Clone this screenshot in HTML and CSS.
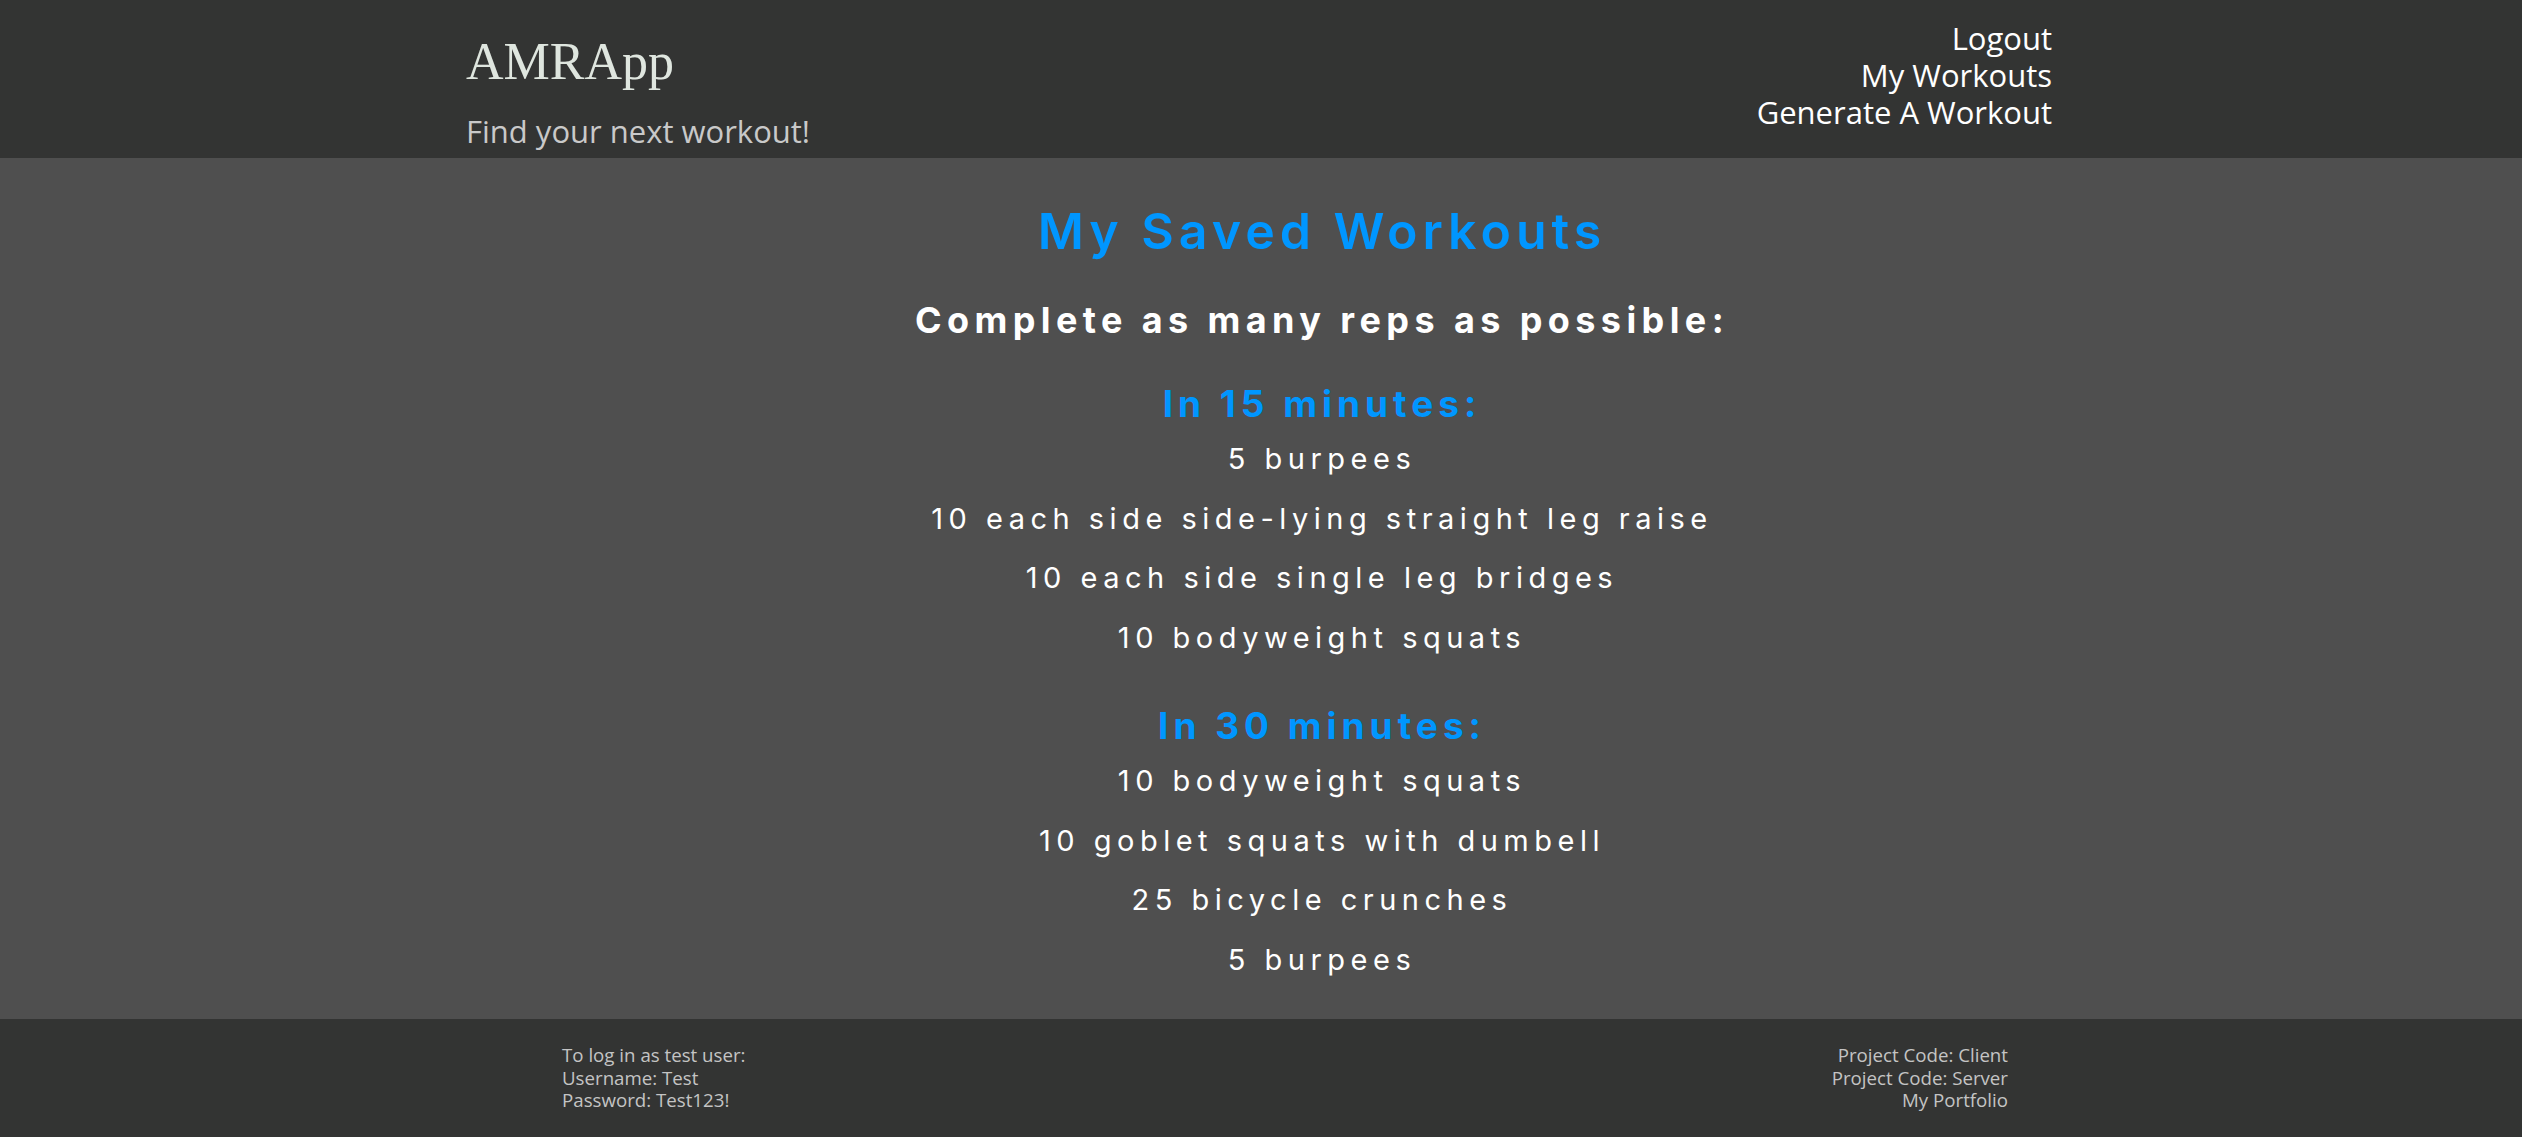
FILE: index.html
```html
<!DOCTYPE html>
<html lang="en">
<head>
<meta charset="utf-8">
<title>AMRApp</title>
<link rel="stylesheet" href="styles.css">
</head>
<body>
<header class="site-header">
  <div class="header-inner">
    <div class="brand">
      <h1 class="logo">AMRApp</h1>
      <p class="tagline">Find your next workout!</p>
    </div>
    <nav class="nav">
      <a href="#">Logout</a>
      <a href="#">My Workouts</a>
      <a href="#">Generate A Workout</a>
    </nav>
  </div>
</header>
<main class="main">
  <h2 class="page-title">My Saved Workouts</h2>
  <h3 class="subtitle">Complete as many reps as possible:</h3>
  <section class="workout">
    <h4 class="duration">In 15 minutes:</h4>
    <ul class="exercises">
      <li>5 burpees</li>
      <li>10 each side side-lying straight leg raise</li>
      <li>10 each side single leg bridges</li>
      <li>10 bodyweight squats</li>
    </ul>
  </section>
  <section class="workout">
    <h4 class="duration">In 30 minutes:</h4>
    <ul class="exercises">
      <li>10 bodyweight squats</li>
      <li>10 goblet squats with dumbell</li>
      <li>25 bicycle crunches</li>
      <li>5 burpees</li>
    </ul>
  </section>
</main>
<footer class="site-footer">
  <div class="footer-inner">
    <div class="footer-left">
      <span>To log in as test user:</span>
      <span>Username: Test</span>
      <span>Password: Test123!</span>
    </div>
    <div class="footer-right">
      <a href="#">Project Code: Client</a>
      <a href="#">Project Code: Server</a>
      <a href="#">My Portfolio</a>
    </div>
  </div>
</footer>
</body>
</html>
```
FILE: styles.css
```css
* { box-sizing: border-box; }
html, body { margin: 0; padding: 0; }
body {
  background: #4f4f4f;
  font-family: "Open Sans", "Noto Sans", sans-serif;
  min-height: 1137px;
  display: flex;
  flex-direction: column;
}
a { color: inherit; text-decoration: none; }

.site-header { background: #333433; height: 158px; }
.header-inner {
  width: 1590px;
  margin: 0 auto;
  display: flex;
  justify-content: space-between;
}
.brand { padding-top: 32px; }
.logo {
  margin: 0;
  font-family: "Liberation Serif", "DejaVu Serif", serif;
  font-weight: 400;
  font-size: 52px;
  line-height: 60px;
  color: #dfe6df;
}
.tagline {
  margin: 19px 0 0;
  font-size: 31px;
  line-height: 40px;
  color: #c9c9c9;
}
.nav {
  padding-top: 20px;
  padding-right: 4px;
  display: flex;
  flex-direction: column;
  align-items: flex-end;
  font-size: 31px;
  line-height: 37px;
  color: #ffffff;
}

.main {
  flex: 1;
  padding: 43px 0 28px 122px;
  text-align: center;
  font-family: "Inter", "Lato", sans-serif;
}
.page-title {
  margin: 0;
  font-size: 50px;
  line-height: 60px;
  font-weight: 600;
  letter-spacing: 5px;
  color: #0096ff;
}
.subtitle {
  margin: 37px 0 0;
  font-size: 36px;
  line-height: 44px;
  font-weight: 700;
  letter-spacing: 5.4px;
  color: #ffffff;
}
.workout { margin-top: 40px; }
.workout + .workout { margin-top: 37px; }
.duration {
  margin: 0 0 3px;
  font-size: 37px;
  line-height: 44px;
  font-weight: 700;
  letter-spacing: 5px;
  color: #0096ff;
}
.exercises {
  list-style: none;
  margin: 0;
  padding: 0;
}
.exercises li {
  font-size: 29px;
  line-height: 59.5px;
  letter-spacing: 5.5px;
  color: #ffffff;
}

.site-footer { background: #333433; height: 118px; }
.footer-inner {
  padding: 25px 514px 0 562px;
  display: flex;
  justify-content: space-between;
  font-size: 18.7px;
  line-height: 22.5px;
  color: #c4c4c4;
}
.footer-left, .footer-right {
  display: flex;
  flex-direction: column;
}
.footer-right { align-items: flex-end; }
```
